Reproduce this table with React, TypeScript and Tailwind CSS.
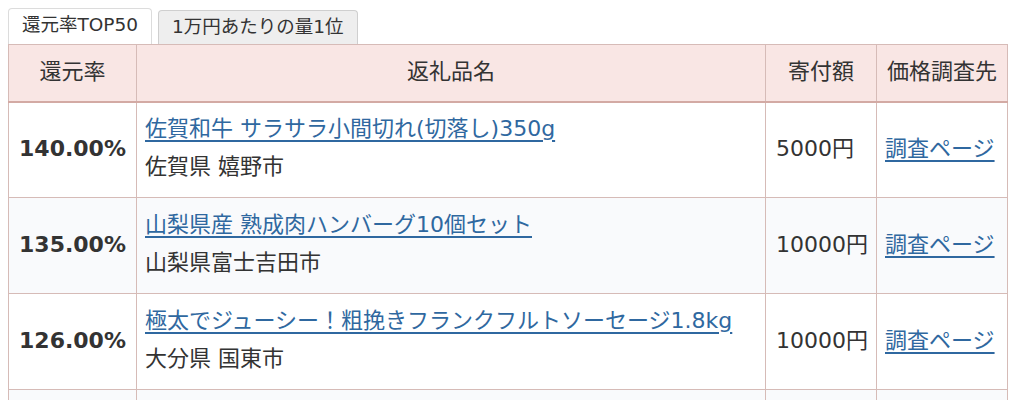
import { useState } from "react";

type Item = {
  rate: string;
  name: string;
  city: string;
  price: string;
};

const ITEMS: Item[] = [
  { rate: "140.00%", name: "佐賀和牛 サラサラ小間切れ(切落し)350g", city: "佐賀県 嬉野市", price: "5000円" },
  { rate: "135.00%", name: "山梨県産 熟成肉ハンバーグ10個セット", city: "山梨県富士吉田市", price: "10000円" },
  { rate: "126.00%", name: "極太でジューシー！粗挽きフランクフルトソーセージ1.8kg", city: "大分県 国東市", price: "10000円" },
];

const TABS = ["還元率TOP50", "1万円あたりの量1位"];

export default function App() {
  const [tab, setTab] = useState(0);

  return (
    <div
      className="h-[400px] overflow-hidden bg-white px-2 pt-2 text-[#333]"
      style={{ fontFamily: '"DejaVu Sans", "Noto Sans CJK JP", sans-serif' }}
    >
      {/* Tabs */}
      <div className="flex items-end gap-[6px]">
        {TABS.map((t, i) => (
          <button
            key={t}
            type="button"
            onClick={() => setTab(i)}
            className={
              i === tab
                ? "h-[36px] rounded-t-[4px] border border-b-0 border-[#dcdcdc] bg-white px-[13px] pb-[3px] text-[18.5px] leading-[30px] text-[#333]"
                : "h-[34px] rounded-t-[4px] border border-b-0 border-[#cfcfcf] bg-[#eeeeee] px-[13px] pb-[2px] text-[18.5px] leading-[30px] text-[#333]"
            }
          >
            {t}
          </button>
        ))}
      </div>

      {/* Table */}
      <table className="w-[999px] table-fixed border-collapse text-[22px]">
        <colgroup>
          <col className="w-[128px]" />
          <col className="w-[629px]" />
          <col className="w-[111px]" />
          <col className="w-[131px]" />
        </colgroup>
        <thead>
          <tr className="h-[57px] bg-[#f9e6e4]">
            <th className="border border-b-2 border-[#d6bbb7] border-b-[#d3aaa4] pb-[3px] text-center font-normal">還元率</th>
            <th className="border border-b-2 border-[#d6bbb7] border-b-[#d3aaa4] pb-[3px] text-center font-normal">返礼品名</th>
            <th className="border border-b-2 border-[#d6bbb7] border-b-[#d3aaa4] pb-[3px] text-center font-normal">寄付額</th>
            <th className="border border-b-2 border-[#d6bbb7] border-b-[#d3aaa4] pb-[3px] text-center font-normal">価格調査先</th>
          </tr>
        </thead>
        <tbody>
          {ITEMS.map((it, i) => (
            <tr key={it.rate} className={i % 2 === 1 ? "h-[96px] bg-[#f9fafc]" : "h-[96px] bg-white"}>
              <td className="border border-[#d6bbb7] pb-[2px] text-center font-bold whitespace-nowrap">{it.rate}</td>
              <td className="border border-[#d6bbb7] px-[8px] pb-[4px] align-middle">
                <a href="#" className="block leading-[38px] text-[#2f68a0] underline decoration-[1.5px] underline-offset-[4px]">
                  {it.name}
                </a>
                <div className="leading-[38px]">{it.city}</div>
              </td>
              <td className="border border-[#d6bbb7] pl-[10px] pr-0 pb-[2px] whitespace-nowrap">{it.price}</td>
              <td className="border border-[#d6bbb7] px-[8px] pb-[2px] whitespace-nowrap">
                <a href="#" className="text-[#2f68a0] underline decoration-[1.5px] underline-offset-[4px]">調査ページ</a>
              </td>
            </tr>
          ))}
          <tr className="h-[96px] bg-[#f9fafc]">
            <td className="border border-[#d6bbb7]" />
            <td className="border border-[#d6bbb7]" />
            <td className="border border-[#d6bbb7]" />
            <td className="border border-[#d6bbb7]" />
          </tr>
        </tbody>
      </table>
    </div>
  );
}
